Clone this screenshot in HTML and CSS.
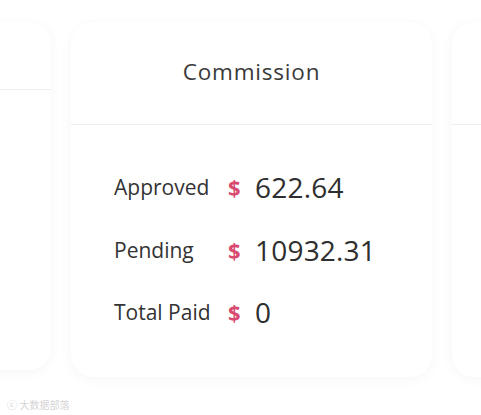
FILE: index.html
```html
<!DOCTYPE html>
<html>
<head>
<meta charset="utf-8">
<link rel="stylesheet" href="styles.css">
</head>
<body>
<div class="viewport">
  <div class="track">
    <div class="card side left">
      <div class="head short"></div>
      <div class="body"></div>
    </div>
    <div class="card main">
      <div class="head"><h2 class="title">Commission</h2></div>
      <div class="body">
        <div class="row"><span class="label">Approved</span><span class="cur">$</span><span class="val">622.64</span></div>
        <div class="row"><span class="label">Pending</span><span class="cur">$</span><span class="val">10932.31</span></div>
        <div class="row"><span class="label">Total Paid</span><span class="cur">$</span><span class="val">0</span></div>
      </div>
    </div>
    <div class="card side right">
      <div class="head"></div>
      <div class="body"></div>
    </div>
  </div>
</div>
<div class="mark"><span class="logo">ⓒ</span> 大数据部落</div>
</body>
</html>
```

FILE: styles.css
```css
html, body {
  margin: 0;
  padding: 0;
  background: #ffffff;
  width: 481px;
  height: 415px;
  overflow: hidden;
  font-family: "Open Sans", "Noto Sans", "Noto Sans CJK SC", sans-serif;
  color: #333;
}
.viewport {
  width: 481px;
  height: 395px;
  overflow: hidden;
}
.track {
  display: flex;
  gap: 20px;
  margin-left: -290px;
  padding-top: 22px;
  align-items: flex-start;
}
.card {
  flex: 0 0 auto;
  width: 361px;
  height: 355px;
  background: #fff;
  border-radius: 22px;
  box-shadow: 0 2px 14px rgba(0, 0, 0, 0.04);
  display: flex;
  flex-direction: column;
}
.side.left { width: 341px; height: 348px; }
.head {
  height: 102px;
  border-bottom: 1px solid #efefef;
  display: flex;
  align-items: center;
  justify-content: center;
  flex: 0 0 auto;
}
.head.short { height: 67px; }
.title {
  margin: 0;
  font-weight: 400;
  font-size: 22.5px;
  letter-spacing: 0.8px;
  color: #3a3a3a;
  padding-bottom: 3px;
}
.main .body {
  padding: 42px 0 0 43px;
  display: flex;
  flex-direction: column;
  gap: 22.5px;
}
.row {
  display: flex;
  align-items: center;
  height: 40px;
}
.label {
  width: 114px;
  font-size: 21px;
  color: #333;
}
.cur {
  width: 27px;
  font-size: 22px;
  font-weight: 700;
  color: #d84a6f;
}
.val {
  font-size: 28px;
  color: #2e2e2e;
  letter-spacing: 0.2px;
}
.mark {
  position: absolute;
  left: 7px;
  top: 397px;
  font-size: 10px;
  color: #d4d4d4;
}
.logo { font-size: 10px; }
```
